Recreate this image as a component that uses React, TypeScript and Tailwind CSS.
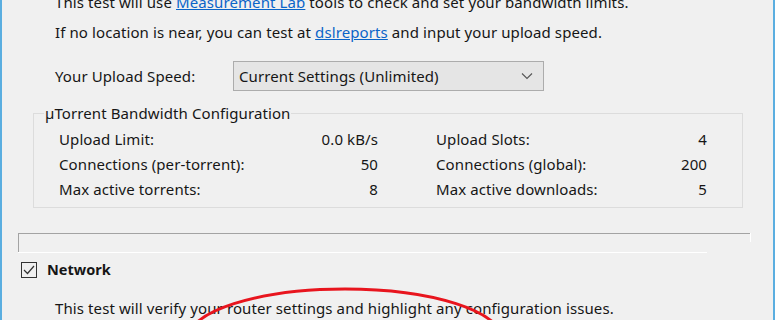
import React from "react";

const font = { fontFamily: '"Noto Sans", "Open Sans", sans-serif' };

function Row({ label, value }: { label: string; value: string }) {
  return (
    <div className="flex h-[25px] items-center justify-between">
      <span>{label}</span>
      <span>{value}</span>
    </div>
  );
}

export default function App() {
  return (
    <div
      className="relative w-[775px] h-[320px] overflow-hidden bg-[#f0f0f0] border-l-2 border-r-2 border-[#5aaee0] text-[15px] tracking-[0.1px] text-[#161616]"
      style={font}
    >
      <div className="flex flex-col">
        <div className="mt-[-9px] h-[22px] leading-[22px] pl-[53px] whitespace-nowrap">
          This test will use{" "}
          <span className="text-[#0a64c8] underline">Measurement Lab</span> tools to check and set your bandwidth limits.
        </div>
        <div className="mt-[8px] h-[22px] leading-[22px] pl-[53px] whitespace-nowrap">
          If no location is near, you can test at{" "}
          <span className="text-[#0a64c8] underline">dslreports</span> and input your upload speed.
        </div>
        <div className="mt-[18px] flex h-[30px] items-center">
          <span className="pl-[53px] w-[231px]">Your Upload Speed:</span>
          <div className="flex h-[30px] w-[311px] items-center justify-between border border-[#acacac] bg-[#e5e5e5] pl-[5px] pr-[10px]">
            <span>Current Settings (Unlimited)</span>
            <svg width="12" height="8" viewBox="0 0 12 8">
              <path d="M1 1.5 L6 6.5 L11 1.5" fill="none" stroke="#555" strokeWidth="1.1" />
            </svg>
          </div>
        </div>
        <fieldset className="mt-[12px] ml-[31px] w-[710px] border border-[#dcdcdc] pl-[25px] pr-[34px] pb-[5px]">
          <legend className="ml-[-15px] px-[1px] h-[20px] leading-[20px]">µTorrent Bandwidth Configuration</legend>
          <div className="mt-[4px] grid grid-cols-[319px_271px] gap-x-[58px]">
            <div className="flex flex-col">
              <Row label="Upload Limit:" value="0.0 kB/s" />
              <Row label="Connections (per-torrent):" value="50" />
              <Row label="Max active torrents:" value="8" />
            </div>
            <div className="flex flex-col">
              <Row label="Upload Slots:" value="4" />
              <Row label="Connections (global):" value="200" />
              <Row label="Max active downloads:" value="5" />
            </div>
          </div>
        </fieldset>
        <div className="mt-[25px] ml-[16px] flex">
          <div className="h-[19px] w-[732px] border-t border-l border-[#a3a3a3]"></div>
          <div className="h-[9px] w-[1px] bg-white"></div>
        </div>
        <div className="ml-[16px] h-[1px] w-[689px] bg-white"></div>
        <div className="mt-[8px] flex h-[17px] items-center">
          <div className="ml-[19px] flex h-[16px] w-[16px] items-center justify-center border border-[#333] bg-[#f0f0f0]">
            <svg width="12" height="10" viewBox="0 0 12 10">
              <path d="M1 5 L4.5 8.5 L11 1" fill="none" stroke="#333" strokeWidth="1.2" />
            </svg>
          </div>
          <span className="ml-[10px] font-bold text-[14.5px] tracking-normal">Network</span>
        </div>
        <div className="mt-[19px] h-[22px] leading-[22px] pl-[53px] whitespace-nowrap">
          This test will verify your router settings and highlight any configuration issues.
        </div>
      </div>
      <svg className="absolute left-0 top-0" width="775" height="320" viewBox="0 0 775 320">
        <ellipse cx="343" cy="339" rx="157" ry="50" fill="none" stroke="#e8151e" strokeWidth="3" />
      </svg>
    </div>
  );
}
